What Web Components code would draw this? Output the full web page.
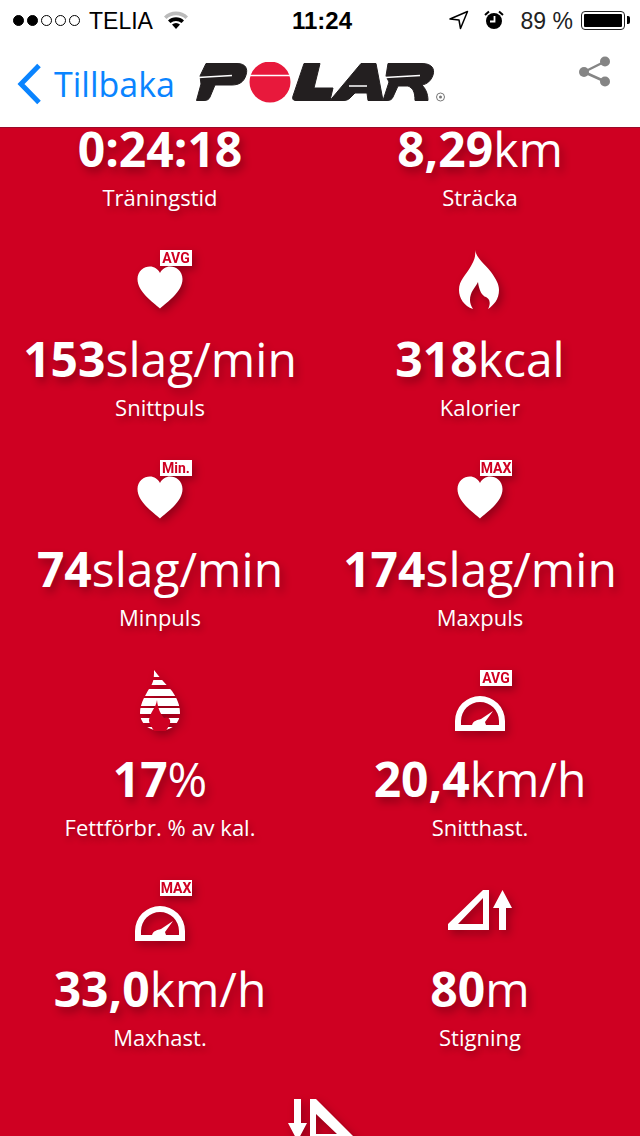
<!DOCTYPE html>
<html lang="sv"><head><meta charset="utf-8"><title>Polar</title>
<style>
html,body{margin:0;padding:0;background:#cf0022;}
body{width:640px;height:1136px;overflow:hidden;font-family:"Open Sans",sans-serif;}
</style></head><body>
<polar-app>
  <status-bar slot="head"></status-bar>
  <nav-bar slot="head"></nav-bar>
  <stat-tile value="0:24:18" label="Träningstid"></stat-tile>
  <stat-tile value="8,29" unit="km" label="Sträcka"></stat-tile>
  <stat-tile value="153" unit="slag/min" label="Snittpuls" icon="heart" badge="AVG"></stat-tile>
  <stat-tile value="318" unit="kcal" label="Kalorier" icon="flame"></stat-tile>
  <stat-tile value="74" unit="slag/min" label="Minpuls" icon="heart" badge="Min."></stat-tile>
  <stat-tile value="174" unit="slag/min" label="Maxpuls" icon="heart" badge="MAX"></stat-tile>
  <stat-tile value="17" unit="%" label="Fettförbr. % av kal." icon="fat"></stat-tile>
  <stat-tile value="20,4" unit="km/h" label="Snitthast." icon="gauge" badge="AVG"></stat-tile>
  <stat-tile value="33,0" unit="km/h" label="Maxhast." icon="gauge" badge="MAX"></stat-tile>
  <stat-tile value="80" unit="m" label="Stigning" icon="ascent"></stat-tile>
  <stat-tile wide icon="descent"></stat-tile>
</polar-app>
<script>
const ICONS={
heart:'<path d="M30 58.500C23 52 7.500 42 7.500 29C7.500 21 14 16.500 20 16.500C24 16.500 28 19 30 23C32 19 36 16.500 40 16.500C46 16.500 52.500 21 52.500 29C52.500 42 37 52 30 58.500Z"/>',
flame:'<path d="M25 0C27 9 34 13 41 22C46 29 49 34 49 40C49 49 44 55 38 59C41 54 40 49 36 47C32 46 29 40 28 32C25 38 20 42 20 50C20 53 21 56 23 59C14 56 9 48 9 40C9 30 16 25 21 16C24 11 26 6 25 0Z"/>',
gauge:'<path fill-rule="evenodd" d="M5 61V51A25 25 0 0 1 55 51V61ZM11 55H49V51A19 19 0 0 0 11 51Z"/><path d="M22 55C23 51 27 50 31 49L43 41L35 52L36 55Z"/>',
fat:'<defs><clipPath id="d"><path d="M24 0C30 8 36 14 42 21C47 28 50 35 50 43C50 52 43 60 33 60H27C17 60 10 52 10 43C10 33 16 24 22 14C24 10 24 5 24 0Z"/></clipPath></defs><g clip-path="url(#d)"><rect y="0" width="60" height="7"/><rect y="10" width="60" height="5"/><rect y="19" width="60" height="7"/><rect y="28" width="60" height="8"/><rect y="38" width="60" height="6"/><rect y="48" width="60" height="5"/><rect y="57" width="60" height="3"/></g><path d="M27 30C26 38 20 42 19 50C19 54 22 57 24 61H36C38 57 41 54 40 50C39 47 36 47 34 48C31 44 28 40 27 30Z" fill="#cf0022"/>',
ascent:'<path fill-rule="evenodd" d="M33 10H39V50H-2V44ZM33 18L8 44H33Z"/><path d="M52.500 10L62 28H56V50H49V28H43Z"/>',
descent:'<path fill-rule="evenodd" d="M20 9H26L67 50H20ZM26 24V44H47Z"/><path d="M4 9H11V33H17L7.500 51L-2 33H4Z"/>'
};
class PolarApp extends HTMLElement{constructor(){super();this.attachShadow({mode:'open'}).innerHTML=`<style>
:host{display:flex;flex-direction:column;width:640px;height:1136px;overflow:hidden;background:#cf0022;color:#fff}
header{flex:none;background:#fff;height:127px;border-bottom:1px solid #9a0a2a;position:relative;z-index:1}
main{flex:1;min-height:0;overflow:hidden}
.grid{display:grid;grid-template-columns:320px 320px;grid-auto-rows:210px;margin-top:-98px}
</style><header><slot name="head"></slot></header><main><div class="grid"><slot></slot></div></main>`}}
class StatusBar extends HTMLElement{constructor(){super();this.attachShadow({mode:'open'}).innerHTML=`<style>
:host{display:flex;align-items:center;height:40px;color:#000;font:23px/40px "Liberation Sans",Arial,sans-serif;padding:1px 0 0 13px;box-sizing:border-box}
.left{display:flex;align-items:center;width:279px}
.dots{display:flex;gap:3px;margin-right:9px}
.dots i{width:11px;height:11px;border-radius:50%;border:1px solid #000;box-sizing:border-box;display:block}
.dots i.f{background:#000}
.wifi{margin-left:11px;margin-top:-1px}
.time{font-weight:700;font-size:24px}
.right{margin-left:auto;height:40px;display:flex;align-items:center}
.pc{margin:0 8px 0 0;color:#222}
.bat{width:44px;height:19px;border:1.500px solid #222;border-radius:4px;box-sizing:border-box;padding:2px;margin-right:15px;position:relative;margin-top:-1px}
.bat b{display:block;height:100%;width:100%;background:#000;border-radius:1px}
.bat:after{content:"";position:absolute;right:-5.500px;top:4px;width:3px;height:8px;background:#000;border-radius:0 2px 2px 0}
svg{display:block}
</style>
<div class="left"><div class="dots"><i class="f"></i><i class="f"></i><i></i><i></i><i></i></div><span>TELIA</span>
<svg class="wifi" width="24" height="18" viewBox="0 0 24 18"><path d="M0 5.500A17 17 0 0 1 24 5.500L21.500 8A14 14 0 0 0 2.500 8Z" fill="#bbb"/><path d="M4 9.500A11.500 11.500 0 0 1 20 9.500L17.500 12A8.500 8.500 0 0 0 6.500 12Z" fill="#000"/><path d="M8 13.500A6 6 0 0 1 16 13.500L12 18Z" fill="#000"/></svg></div>
<span class="time">11:24</span>
<div class="right">
<svg width="20" height="20" viewBox="0 0 20 20" style="margin-right:15px;margin-top:-1px"><path d="M1 9L18.500 1.500L11.500 18.500L10 10Z" fill="none" stroke="#000" stroke-width="1.500" stroke-linejoin="round"/></svg>
<svg width="20" height="20" viewBox="0 0 20 20" style="margin-right:17px;margin-top:-1px"><circle cx="10" cy="11" r="8" fill="#000"/><path d="M1 5L5 1.500M19 5L15 1.500" stroke="#000" stroke-width="2"/><path d="M10.500 6V11.500H6" stroke="#fff" stroke-width="1.800" fill="none"/></svg>
<span class="pc">89 %</span><div class="bat"><b></b></div></div>`}}
class NavBar extends HTMLElement{constructor(){super();this.attachShadow({mode:'open'}).innerHTML=`<style>
:host{display:flex;align-items:center;height:87px;padding:0 30px 0 17px;box-sizing:border-box}
.t{font:34px/1 "Open Sans",sans-serif;margin-left:12px;color:#0a84ff}
svg{display:block}
.logo{margin-left:21px;margin-top:1px}
.share{margin-left:auto;margin-top:-24px}
</style>
<svg width="25" height="42" viewBox="0 0 25 42"><path d="M22 2.500L4 21L22 39.500" fill="none" stroke="#0a84ff" stroke-width="5"/></svg>
<span class="t">Tillbaka</span>
<svg class="logo" role="img" aria-label="Polar" width="250" height="44" viewBox="0 0 250 44">
<g fill="#231f20" stroke="#231f20" stroke-width="1" stroke-linejoin="round">
<path d="M10 1.500H41C50 1.500 52 7 50 13C48 20 43 23 36 23H19L14 35C13 37.500 11 38.500 8 38.500H0.500L5 22L4 14Z"/>
<path d="M108 1.500H124L118 26H137L134 38.500H100C97 38.500 96 37 97 34Z"/>
<path d="M165 1.500H180L187 38.500H172L171 31H159L154 36C152 38 150 38.500 147 38.500H134Z"/>
<path d="M192 1.500H226C236 1.500 239 7 237 13C235 19 231 22 226 23C229 26 232 31 232 38.500H219C219 30 217 26 212 24H202L197 35C196 37.500 194 38.500 191 38.500H187L193 20L190 14Z"/>
</g>
<g stroke="#fff" stroke-width="1.500" fill="none"><path d="M2 15.500L36 13.500"/><path d="M153 24L171 24"/><path d="M189 15.500L224 13.500"/></g>
<circle cx="74" cy="20" r="20.500" fill="#e8193c"/>
<path d="M52 13.500H96" stroke="#fff" stroke-width="1.500"/>
<circle cx="244.500" cy="35" r="4" fill="none" stroke="#777" stroke-width="1"/><circle cx="244.500" cy="35" r="1.500" fill="#777"/>
</svg>
<svg class="share" width="32" height="32" viewBox="0 0 32 32"><g fill="#858585"><circle cx="6" cy="16" r="5"/><circle cx="27" cy="5.500" r="5"/><circle cx="27" cy="25.500" r="5"/></g><path d="M6 16L27 5.500M6 16L27 25.500" stroke="#858585" stroke-width="2.500"/></svg>`}}
class StatTile extends HTMLElement{
connectedCallback(){
if(this.shadowRoot)return;
const a=n=>this.getAttribute(n);
const r=this.attachShadow({mode:'open'});
const badge=a('badge')?`<span class="badge">${a('badge')}</span>`:'';
const icon=a('icon')?`<svg viewBox="0 0 60 70" width="60" height="70" fill="#fff">${ICONS[a('icon')]}</svg>`:'';
const text=a('value')?`<div class="v"><b>${a('value')}</b>${a('unit')||''}</div><div class="l">${a('label')}</div>`:'';
r.innerHTML=`<style>
:host{display:flex;flex-direction:column;align-items:center;color:#fff;font-family:"Open Sans",sans-serif;text-align:center}
:host([wide]){grid-column:1/-1}
.i{position:relative;width:60px;height:60px;margin-top:10px;flex:none;filter:drop-shadow(3px 4px 4px rgba(0,0,0,.3))}
.i svg{display:block;overflow:visible}
.badge{position:absolute;left:30px;top:0;width:32px;height:16px;background:#fff;color:#cf0022;font:700 14px/16px "Roboto",sans-serif;text-align:center;white-space:nowrap}
.v{margin-top:19px;height:60px;font-size:48px;line-height:60px;white-space:nowrap;text-shadow:3px 5px 8px rgba(0,0,0,.3)}
.v b{font-weight:700}
.l{margin-top:3px;font-size:22px;line-height:30px;white-space:nowrap;text-shadow:2px 4px 6px rgba(0,0,0,.3)}
</style><div class="i">${icon}${badge}</div>${text}`;
}}
customElements.define('polar-app',PolarApp);
customElements.define('status-bar',StatusBar);
customElements.define('nav-bar',NavBar);
customElements.define('stat-tile',StatTile);
</script>
</body></html>
